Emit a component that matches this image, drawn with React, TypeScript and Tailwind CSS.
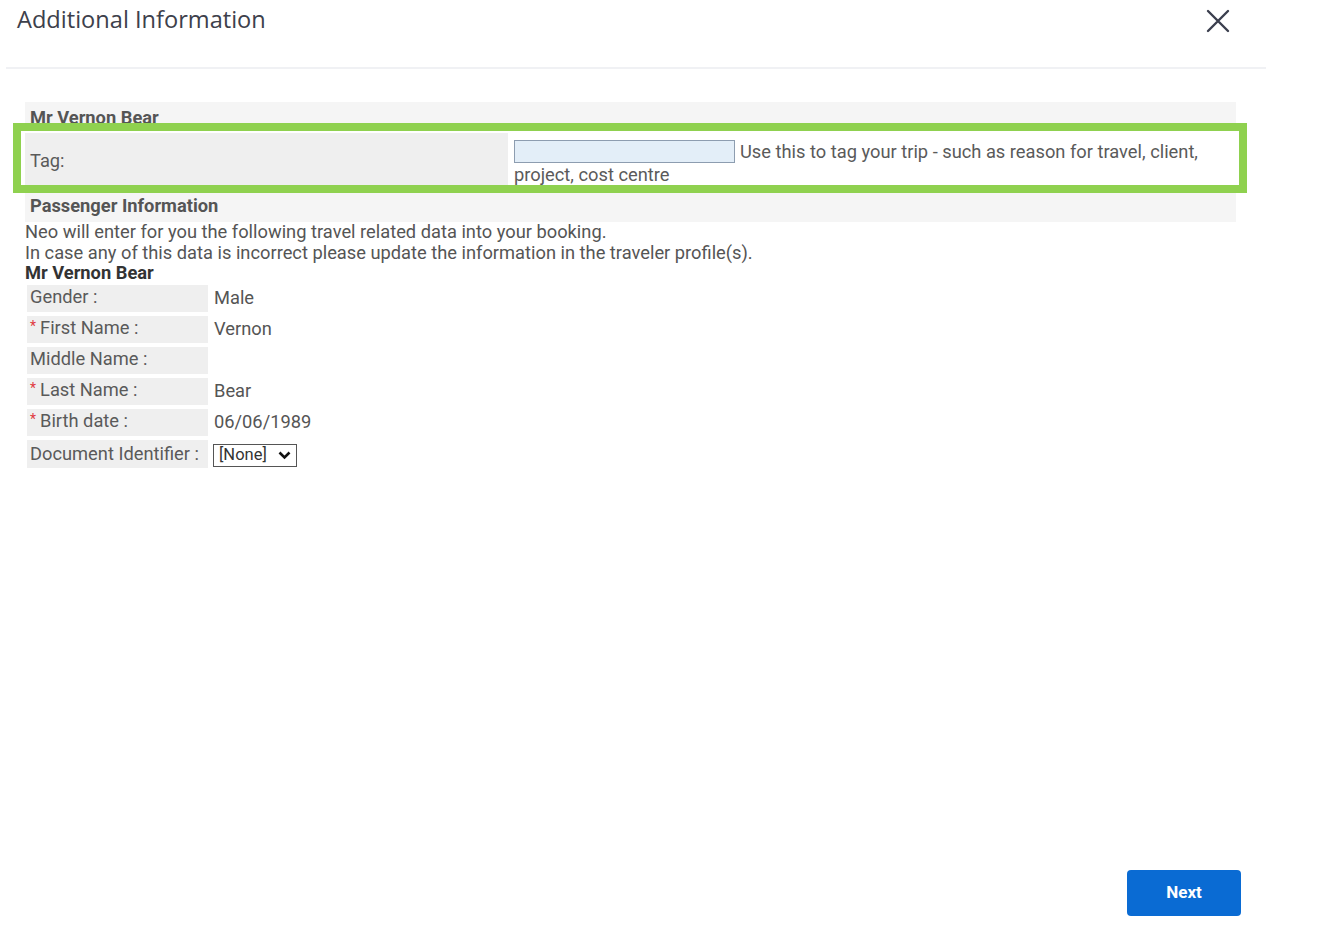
import React from 'react';

const rows = [
  { label: 'Gender :', value: 'Male', req: false },
  { label: 'First Name :', value: 'Vernon', req: true },
  { label: 'Middle Name :', value: '', req: false },
  { label: 'Last Name :', value: 'Bear', req: true },
  { label: 'Birth date :', value: '06/06/1989', req: true },
];

export default function App() {
  return (
    <div className="w-[1333px] h-[940px] bg-white flex flex-col font-['Roboto','Liberation_Sans',sans-serif] text-[#5a5a5a]">
      {/* header */}
      <div className="ml-[6px] w-[1260px] h-[69px] border-b-2 border-[#f0f1f4] flex items-start justify-between pl-[11px] pr-[36px] pt-[3px]">
        <h1 className="font-['Open_Sans','Noto_Sans',sans-serif] text-[23.6px] leading-[32px] text-[#3d404b]">Additional Information</h1>
        <svg width="24" height="24" viewBox="0 0 24 24" className="mt-[6px] text-[#3b3f4e]">
          <path d="M2 2 L22 22 M22 2 L2 22" stroke="currentColor" strokeWidth="2.4" strokeLinecap="round" fill="none" />
        </svg>
      </div>

      <div className="pl-[25px] pt-[33px] w-[1236px] flex flex-col">
        {/* grey panel */}
        <div className="bg-[#f5f5f5] flex flex-col w-[1211px]">
          <div className="h-[21px] overflow-hidden pl-[5px]">
            <div className="pt-[5px] leading-[21px] text-[18.3px] font-bold text-[#555]">Mr Vernon Bear</div>
          </div>
          <div className="-ml-[12px] w-[1234px] border-[8px] border-[#8fd14f] bg-white pt-[2px] pl-[4px] pr-[2px]">
            <div className="flex h-[52px]">
              <div className="w-[483px] bg-[#efefef] flex items-center pl-[5px] pt-[3px] text-[18.3px] shrink-0">Tag:</div>
              <div className="pl-[6px] pt-[7px] text-[18.3px] leading-[23px] text-[#5a5a5a]">
                <input
                  type="text"
                  className="w-[221px] h-[23px] bg-[#e3eef8] border border-[#8d9db0] align-top mr-[5px] outline-none"
                />
                Use this to tag your trip - such as reason for travel, client, project, cost centre
              </div>
            </div>
          </div>
          <div className="h-[29px] flex items-center pl-[5px] pb-[3px] text-[18.3px] font-bold text-[#555]">Passenger Information</div>
        </div>

        <div className="text-[18.3px] leading-[20.5px] text-[#555]">
          <p>Neo will enter for you the following travel related data into your booking.</p>
          <p>In case any of this data is incorrect please update the information in the traveler profile(s).</p>
          <p className="font-bold text-[#333]">Mr Vernon Bear</p>
        </div>

        <div className="flex flex-col gap-[4px] pt-[1px] pl-[2px]">
          {rows.map((r) => (
            <div key={r.label} className="flex h-[27px] text-[18.3px]">
              <div className="w-[181px] bg-[#efefef] flex items-center pl-[3px] pb-[2px] text-[#5a5a5a]">
                {r.req && <span className="text-[#e0393e] text-[14px] mr-[4px] -mt-[4px]">*</span>}
                {r.label}
              </div>
              <div className="flex items-center pl-[6px] text-[#555]">{r.value}</div>
            </div>
          ))}
          <div className="flex h-[28px] text-[18.3px]">
            <div className="w-[181px] bg-[#efefef] flex items-center pl-[3px] text-[#5a5a5a]">Document Identifier :</div>
            <div className="flex items-center pl-[5px] pt-[3px]">
              <div className="w-[84px] h-[23px] border border-[#555] bg-white flex items-center justify-between pl-[5px] pr-[5px] text-[16.5px] leading-[20px] text-[#333]">
                <span>[None]</span>
                <svg width="13" height="9" viewBox="0 0 13 9">
                  <path d="M1.5 1.5 L6.5 6.5 L11.5 1.5" stroke="#111" strokeWidth="2.6" fill="none" />
                </svg>
              </div>
            </div>
          </div>
        </div>
      </div>

      <div className="flex-1" />
      <div className="flex justify-end pr-[92px] pb-[24px]">
        <button className="w-[114px] h-[46px] rounded-[4px] bg-[#0a6bd3] text-white font-bold text-[17px]">Next</button>
      </div>
    </div>
  );
}
